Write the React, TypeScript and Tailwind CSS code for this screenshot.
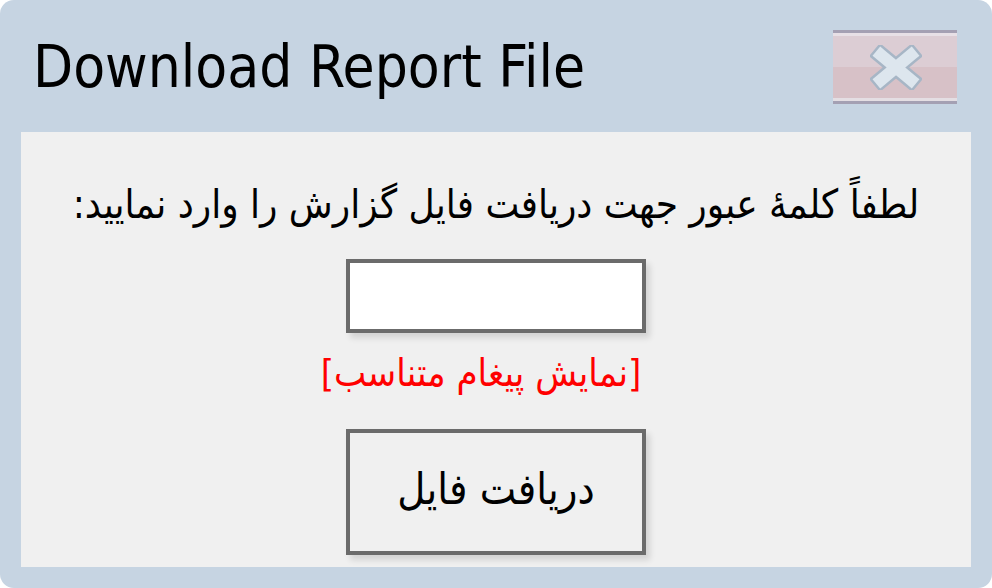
const CloseButton = () => (
  <button className="relative w-[124px] h-[74px]" aria-label="close">
    <div className="absolute inset-0 flex flex-col border-y-[3px] border-[#a4a0b3]">
      <div className="h-[3px] bg-[#e7e0e6]" />
      <div className="flex-1 bg-[#dccdd4]" />
      <div className="flex-1 bg-[#d7c1c7]" />
      <div className="h-[3px] bg-[#e4dee3]" />
    </div>
    <svg className="absolute left-[37px] top-[15px]" width="52" height="45" viewBox="0 0 52 45">
      <g strokeLinecap="square">
        <path d="M11 10 L41 35 M41 10 L11 35" stroke="#a7b6c6" strokeWidth="17" />
        <path d="M11 10 L41 35 M41 10 L11 35" stroke="#dde6ee" strokeWidth="12" />
      </g>
    </svg>
  </button>
);

export default function App() {
  return (
    <div className="w-[992px] h-[588px] bg-white">
      <div className="w-full h-full rounded-[14px] bg-[#c6d4e2] flex flex-col">
        <div className="h-[132px] flex items-start justify-between pl-[33px] pr-[35px]">
          <h1
            className="mt-[30px] text-[58px] leading-[74px] text-black"
            style={{ fontFamily: '"DejaVu Sans Condensed", "DejaVu Sans", sans-serif' }}
          >
            Download Report File
          </h1>
          <div className="mt-[30px]">
            <CloseButton />
          </div>
        </div>
        <div
          dir="rtl"
          className="mx-[21px] mb-[21px] flex-1 bg-[#f0f0f0] flex flex-col items-center"
          style={{ fontFamily: '"DejaVu Sans Condensed", "DejaVu Sans", sans-serif' }}
        >
          <p className="mt-[46px] text-[40px] leading-[52px] text-black">
            لطفاً کلمهٔ عبور جهت دریافت فایل گزارش را وارد نمایید:
          </p>
          <input
            type="password"
            className="mt-[29px] w-[300px] h-[74px] bg-white border-[4px] border-[#6b6b6b] outline-none shadow-[4px_5px_6px_rgba(0,0,0,0.12)]"
          />
          <p className="mt-[16px] mr-[30px] text-[38px] leading-[48px] text-[#ff0000]">
            [نمایش پیغام متناسب]
          </p>
          <button className="mt-[32px] w-[300px] h-[126px] bg-[#f0f0f0] border-[4px] border-[#6b6b6b] text-[43px] leading-[52px] pb-[6px] text-black shadow-[4px_5px_6px_rgba(0,0,0,0.12)]">
            دریافت فایل
          </button>
        </div>
      </div>
    </div>
  );
}
